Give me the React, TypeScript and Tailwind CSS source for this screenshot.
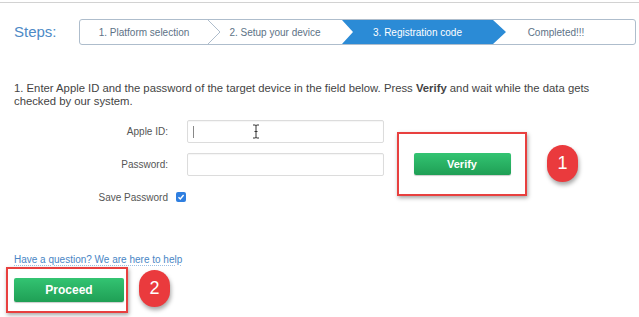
import React from 'react'

const font = { fontFamily: '"Liberation Sans", Arial, Helvetica, sans-serif' }

function StepBar() {
  return (
    <div className="relative h-[26px] w-[557px] rounded-[3px] border border-[#aebdcc] bg-white">
      <svg
        className="absolute left-0 top-0"
        width="555"
        height="24"
        viewBox="0 0 555 24"
        fill="none"
      >
        <polygon points="262,0 413,0 426,12 413,24 262,24 273,12" fill="#2b8bd6" />
        <polyline points="128,0 140,12 128,24" stroke="#aebdcc" strokeWidth="1" />
      </svg>
      <div className="relative flex h-full items-center text-[10px] text-[#5d7286]">
        <div className="w-[128px] text-center">1. Platform selection</div>
        <div className="w-[134px] text-center">2. Setup your device</div>
        <div className="w-[151px] text-center text-white">3. Registration code</div>
        <div className="flex-1 pr-[16px] text-center">Completed!!!</div>
      </div>
    </div>
  )
}

function Badge({ n }: { n: string }) {
  return (
    <div className="flex h-[37px] w-[31px] items-center justify-center rounded-full bg-[#ea3a3d] text-[18px] text-white shadow-[1px_3px_4px_rgba(0,0,0,0.35)]">
      {n}
    </div>
  )
}

function GreenButton({ label, className }: { label: string; className: string }) {
  return (
    <button
      type="button"
      className={`rounded-[2px] bg-gradient-to-b from-[#33c472] to-[#1f9f55] font-bold text-white shadow-[0_1px_1px_rgba(0,0,0,0.2)] ${className}`}
    >
      {label}
    </button>
  )
}

export default function App() {
  return (
    <div className="h-[317px] w-[639px] overflow-hidden bg-white" style={font}>
      <div className="mt-[2px] h-px bg-[#d2d2d2]" />

      <div className="mt-[16px] flex items-center pl-[14px]">
        <div className="w-[65px] text-[15px] text-[#4d8ac6]">Steps:</div>
        <StepBar />
      </div>

      {/* wrapped by hand so the break matches the screenshot */}
      <div className="mt-[37px] pl-[14px] text-[11.3px] leading-[13.2px] text-[#444]">
        <div className="whitespace-nowrap">
          1. Enter Apple ID and the password of the target device in the field below. Press{' '}
          <b>Verify</b> and wait while the data gets
        </div>
        <div>checked by our system.</div>
      </div>

      <div className="mt-[12px] flex items-start">
        <div className="ml-[102px] flex flex-col text-[10px] text-[#555]">
          <div className="flex items-center">
            <div className="w-[66px] text-right">Apple ID:</div>
            <div className="relative ml-[19px] h-[23px] w-[197px] rounded-[2px] border border-[#dcdcdc] shadow-[inset_0_1px_1px_rgba(0,0,0,0.04)]">
              <div className="absolute left-[5px] top-[5px] h-[12px] w-px bg-[#888]" />
              <svg className="absolute left-[64px] top-[3px]" width="8" height="15" viewBox="0 0 8 15">
                <path
                  d="M1 1 H3 Q4 1 4 2 Q4 1 5 1 H7 M4 2 V13 M1 14 H3 Q4 14 4 13 Q4 14 5 14 H7 M2.5 7.5 H5.5"
                  stroke="#333"
                  strokeWidth="1"
                  fill="none"
                />
              </svg>
            </div>
          </div>
          <div className="mt-[10px] flex items-center">
            <div className="w-[66px] text-right">Password:</div>
            <div className="ml-[19px] h-[23px] w-[197px] rounded-[2px] border border-[#dcdcdc] shadow-[inset_0_1px_1px_rgba(0,0,0,0.04)]" />
          </div>
          <div className="mt-[15px] flex h-[12px] items-center">
            <div className="flex w-[66px] justify-end whitespace-nowrap">Save Password</div>
            <div className="ml-[8px] flex h-[10px] w-[10px] items-center justify-center rounded-[2px] bg-[#2f7fe0]">
              <svg width="8" height="8" viewBox="0 0 8 8">
                <path d="M1.5 4.2 L3.3 6 L6.6 2" stroke="white" strokeWidth="1.4" fill="none" />
              </svg>
            </div>
          </div>
        </div>

        <div className="ml-[13px] mt-[12px] flex h-[64px] w-[130px] items-center justify-center border-2 border-[#e8403f] shadow-[1px_2px_4px_rgba(0,0,0,0.35)]">
          <GreenButton label="Verify" className="h-[22px] w-[97px] text-[11px]" />
        </div>

        <div className="ml-[20px] mt-[25px]">
          <Badge n="1" />
        </div>
      </div>

      <div className="mt-[51px] pl-[14px] text-[10px] leading-[12px]">
        <a className="text-[#4a86c5] underline decoration-dotted decoration-[#9cbfe3] underline-offset-2">
          Have a question? We are here to help
        </a>
      </div>

      <div className="mt-[1px] flex items-center pl-[6px]">
        <div className="flex h-[46px] w-[122px] items-center border-2 border-[#e8403f] pl-[6px] shadow-[1px_2px_4px_rgba(0,0,0,0.35)]">
          <GreenButton label="Proceed" className="h-[24px] w-[110px] text-[12px]" />
        </div>
        <div className="ml-[11px] -mt-[3px]">
          <Badge n="2" />
        </div>
      </div>
    </div>
  )
}
